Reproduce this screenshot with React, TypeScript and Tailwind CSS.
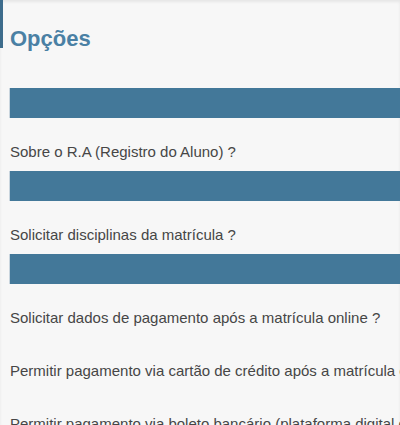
import React from 'react';

type Option = {
  label: string;
  bar: boolean;
};

const options: Option[] = [
  { label: 'Sobre o R.A (Registro do Aluno) ?', bar: true },
  { label: 'Solicitar disciplinas da matrícula ?', bar: true },
  { label: 'Solicitar dados de pagamento após a matrícula online ?', bar: false },
  { label: 'Permitir pagamento via cartão de crédito após a matrícula online ?', bar: false },
  { label: 'Permitir pagamento via boleto bancário (plataforma digital de pagamentos) ?', bar: false },
];

function Bar() {
  return <div className="h-[30px] w-[420px] border-l border-[#c9d5de] bg-[#437899]" />;
}

export default function App() {
  return (
    <div
      className="relative h-[425px] w-[400px] overflow-hidden bg-[#f7f7f7] shadow-[inset_0_2px_3px_rgba(0,0,0,0.07)]"
      style={{ fontFamily: '"Liberation Sans", Arial, sans-serif' }}
    >
      {/* Header */}
      <div className="flex items-start">
        <div className="h-[48px] w-[3px] bg-[#3d6c8c]" />
        <h1 className="ml-[7px] mt-[26px] text-[22px] font-bold leading-[26px] text-[#4a80a4]">Opções</h1>
      </div>

      {/* Options */}
      <div className="ml-[9px] mt-[36px] whitespace-nowrap">
        <div className="pb-[25px]">
          <Bar />
        </div>
        {options.map((o) => (
          <div key={o.label} className="pb-[25px]">
            <p className="pl-px text-[15px] leading-[18px] text-[#464646]">{o.label}</p>
            <div className="pt-[10px]">{o.bar && <Bar />}</div>
          </div>
        ))}
      </div>
    </div>
  );
}
